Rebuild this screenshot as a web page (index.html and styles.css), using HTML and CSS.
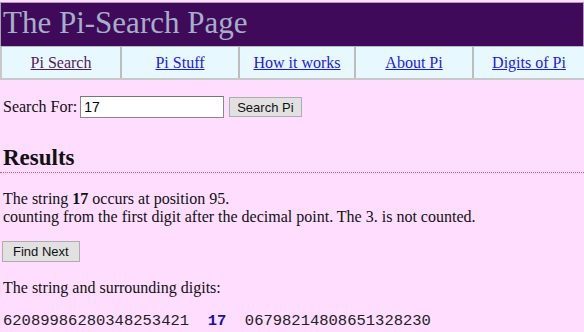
FILE: index.html
```html
<!DOCTYPE html>
<html lang="en">
<head>
  <meta charset="UTF-8" />
  <title>The Pi-Search Page</title>
  <link rel="stylesheet" href="styles.css">
</head>
<body>
  <header class="banner">
    <h1 class="title">The Pi-Search Page</h1>
  </header>

  <nav class="menu">
    <div class="menu-cell"><a href="#" class="visited">Pi Search</a></div>
    <div class="menu-cell"><a href="#">Pi Stuff</a></div>
    <div class="menu-cell"><a href="#">How it works</a></div>
    <div class="menu-cell"><a href="#">About Pi</a></div>
    <div class="menu-cell"><a href="#">Digits of Pi</a></div>
  </nav>

  <main class="content">
    <form class="search-form">
      <label for="query">Search For:</label>
      <input type="text" id="query" value="17">
      <button type="button" class="btn">Search Pi</button>
    </form>

    <h2 class="results-title">Results</h2>

    <p class="result-text">The string <b>17</b> occurs at position 95.<br>
    counting from the first digit after the decimal point. The 3. is not counted.</p>

    <button type="button" class="btn btn-next">Find Next</button>

    <p class="surround-label">The string and surrounding digits:</p>

    <pre class="digits">62089986280348253421  <b class="hit">17</b>  06798214808651328230</pre>
  </main>
</body>
</html>
```

FILE: styles.css
```css
* {
  box-sizing: border-box;
}

body {
  margin: 0;
  background: #ffddff;
  color: #111;
  font-family: "Liberation Serif", "Times New Roman", serif;
  font-size: 16px;
}

.banner {
  margin-top: 2px;
  height: 44px;
  background: #400a5a;
  border: 1px solid #a8a0b0;
  border-bottom: none;
}

.title {
  margin: 0;
  padding-left: 2px;
  font-size: 31px;
  font-weight: normal;
  line-height: 40px;
  color: #a4b0c8;
}

.menu {
  display: grid;
  grid-template-columns: 120px 118px 116px 118px 1fr;
  height: 34px;
  background: #e8f8ff;
  border-top: 1px solid #b8b8c0;
  border-bottom: 2px solid #c8c8c8;
}

.menu-cell {
  display: flex;
  align-items: center;
  justify-content: center;
  border-left: 2px solid #bdbdbd;
}

.menu-cell:first-child {
  border-left: 2px solid #c8c8c8;
}

.menu a {
  color: #1a1aee;
}

.menu a.visited {
  color: #551a5b;
}

.content {
  padding: 0 3px;
}

.search-form {
  display: flex;
  align-items: center;
  gap: 3px;
  margin-top: 16px;
}

.search-form input {
  width: 144px;
  height: 22px;
  padding: 1px 3px;
  border: 1px solid #8a8a8a;
  border-top-color: #767676;
  font-family: "Liberation Sans", Arial, sans-serif;
  font-size: 14px;
  background: #fff;
}

.btn {
  height: 20px;
  padding: 0 8px;
  background: #e1e1e1;
  border: 1px solid #adadad;
  font-family: "Liberation Sans", Arial, sans-serif;
  font-size: 13px;
  color: #111;
}

.search-form .btn {
  margin-left: 2px;
  padding: 0 7px;
}

.results-title {
  margin: 27px -3px 0;
  padding: 0 3px 1px;
  font-size: 23px;
  line-height: 26px;
  border-bottom: 1px dotted #ff5070;
}

.result-text {
  margin: 17px 0 0;
  line-height: 18px;
}

.btn-next {
  display: block;
  margin-top: 15px;
  margin-left: -1px;
  height: 21px;
  padding: 0 10px;
}

.surround-label {
  margin: 17px 0 0;
}

.digits {
  margin: 15px 0 0;
  font-family: "Liberation Mono", "Courier New", monospace;
  font-size: 15.5px;
  color: #222;
}

.hit {
  color: #1414a8;
}
```
